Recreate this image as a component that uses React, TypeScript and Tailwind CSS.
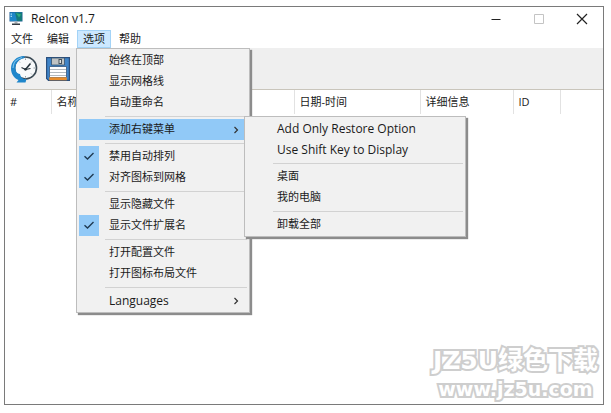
import clsx from "clsx";
import type React from "react";

interface MenuEntry {
	label: string;
	latin?: boolean;
	checked?: boolean;
	submenu?: MenuEntry[][];
}

const MENU_BAR = ["文件", "编辑", "选项", "帮助"];

const CONTEXT_MENU: MenuEntry[][] = [
	[
		{ label: "Add Only Restore Option", latin: true },
		{ label: "Use Shift Key to Display", latin: true },
	],
	[{ label: "桌面" }, { label: "我的电脑" }],
	[{ label: "卸载全部" }],
];

const OPTIONS_MENU: MenuEntry[][] = [
	[{ label: "始终在顶部" }, { label: "显示网格线" }, { label: "自动重命名" }],
	[{ label: "添加右键菜单", submenu: CONTEXT_MENU }],
	[
		{ label: "禁用自动排列", checked: true },
		{ label: "对齐图标到网格", checked: true },
	],
	[{ label: "显示隐藏文件" }, { label: "显示文件扩展名", checked: true }],
	[{ label: "打开配置文件" }, { label: "打开图标布局文件" }],
	[{ label: "Languages", latin: true, submenu: [] }],
];

const AppIcon = () => (
	<svg className="w-4 h-4" viewBox="0 0 16 16" aria-hidden="true">
		<path d="M1.500 1h13v9.500h-13z" fill="#1f5c94" />
		<path d="M2 1.500h12v8.500H2z" fill="#1e86c8" />
		<path d="M7 1.500h7v8.500H9z" fill="#157a7c" />
		<path d="M8 2l5 1.500-2 3z" fill="#2fae7c" />
		<path d="M2.600 2.500h1.400v1.200H2.600zM2.600 4.800h1.400v1.200H2.600z" fill="#a8dcf2" />
		<path d="M6.500 10.500h3v2h-3z" fill="#a9b0b5" />
		<path d="M4 12.500h8v1.500H4z" fill="#333b42" />
	</svg>
);

const RestoreIcon = () => (
	<svg className="w-7 h-7" viewBox="0 0 28 28" aria-hidden="true">
		<circle cx="15.500" cy="13" r="11" fill="#f8fafb" stroke="#3b4a55" strokeWidth="1.600" />
		<path
			d="M14.500 1C6.500 1 1 6.500 1 13.500c0 5.500 3 9.500 7.500 11.500l-2 2.500h9l1-3.500c-4 .2-6-2-6.500-5C6.500 18.500 5.500 16 5.500 13 5.500 8 9 4 14.500 3z"
			fill="#1f86cb"
		/>
		<path d="M12 2.500C6.500 4 3 8 3 13" fill="none" stroke="#74bfe9" strokeWidth="1.200" />
		<path d="M15.500 14.500 20.500 8.500" fill="none" stroke="#26333b" strokeWidth="1.600" />
		<path d="M15.500 14.500l-4-2M15.500 14.500l5-1" fill="none" stroke="#26333b" strokeWidth="1.200" />
		<circle cx="15.500" cy="14.300" r="1.400" fill="#26333b" />
		<path
			d="M15.500 3.500v1.500M25 13h-1.500M15.500 22.500V21M22 6.500l-1 1M22 19.500l-1-1M9 6.500l1 1"
			stroke="#8b979f"
			strokeWidth=".9"
		/>
	</svg>
);

const SaveIcon = () => (
	<svg className="w-6 h-6" viewBox="0 0 24 24" aria-hidden="true">
		<path d="M.6 .6h22.800v22.800H2.500L.6 21.500z" fill="#3f84c8" stroke="#2a4f7d" strokeWidth="1.200" />
		<path d="M5.500 1h13v7h-13z" fill="#bfc3c4" stroke="#35536f" strokeWidth=".8" />
		<path d="M12.500 2h3.500v5h-3.500z" fill="#46525b" />
		<path d="M13.500 3h1.500v3h-1.500z" fill="#dfe3e5" />
		<path d="M3.500 9.500h17v11h-17z" fill="#fff" stroke="#34577f" strokeWidth=".8" />
		<path d="M4 12.500h16M4 15.500h16M4 18.500h16" stroke="#a9b1b8" strokeWidth=".9" />
		<path d="M3.200 20.300h17.600v3H3.200z" fill="#e88d2c" />
	</svg>
);

const CheckMark = () => (
	<svg className="w-3 h-3" viewBox="0 0 12 12" fill="none" stroke="#1f3a52" strokeWidth="1.400" aria-hidden="true">
		<path d="M1.500 5.200 4.500 8 10.500 2" />
	</svg>
);

const Chevron = () => (
	<svg className="w-2 h-2" viewBox="0 0 8 8" fill="none" stroke="#333" strokeWidth="1.200" aria-hidden="true">
		<path d="M2.500 1 5.500 4 2.500 7" />
	</svg>
);

const Menu: React.FC<{ groups: MenuEntry[][]; className: string }> = ({
	groups,
	className,
}) => (
	<div
		role="menu"
		className={clsx(
			"absolute z-10 border border-[#bdbdbd] bg-[#f1f1f1] px-0.5 py-px shadow-[2px_2px_1px_#8c8c8c]",
			className,
		)}
	>
		{groups.map((group, index) => (
			<div key={group[0].label}>
				{index > 0 && (
					<div className="flex h-1.5 items-center pl-[26px]">
						<div className="h-px w-full bg-[#d2d2d2]" />
					</div>
				)}
				{group.map((entry) => (
					<div key={entry.label} className="relative">
						<button
							type="button"
							role={entry.checked ? "menuitemcheckbox" : "menuitem"}
							aria-checked={entry.checked}
							className={clsx(
								"flex h-[21px] w-full items-center whitespace-nowrap pr-[7px] text-left",
								entry.latin && "text-[12px]",
								entry.submenu?.length && "bg-[#91c9f7]",
							)}
						>
							<span
								className={clsx(
									"mr-2.5 flex h-full w-5 items-center justify-center",
									entry.checked && "bg-[#91c9f7]",
								)}
							>
								{entry.checked && <CheckMark />}
							</span>
							<span className="flex-1">{entry.label}</span>
							{entry.submenu && <Chevron />}
						</button>
						{entry.submenu && entry.submenu.length > 0 && (
							<Menu groups={entry.submenu} className="left-[165px] -top-[3px] w-[222px]" />
						)}
					</div>
				))}
			</div>
		))}
	</div>
);

const TitleBar = () => (
	<header className="flex h-[23px] items-center pl-[3px]">
		<AppIcon />
		<h1 className="ml-[7px] flex-1 text-[12px]">ReIcon v1.7</h1>
		<button type="button" aria-label="最小化" className="flex w-[43px] justify-center">
			<svg className="w-3 h-3" viewBox="0 0 12 12" stroke="#222" aria-hidden="true">
				<path d="M1.500 6.500h9" />
			</svg>
		</button>
		<button type="button" aria-label="最大化" disabled className="flex w-[43px] justify-center">
			<svg className="w-3 h-3" viewBox="0 0 12 12" fill="none" stroke="#c4c4c4" aria-hidden="true">
				<path d="M1.500 1.500h9v9h-9z" />
			</svg>
		</button>
		<button type="button" aria-label="关闭" className="flex w-[43px] justify-center">
			<svg className="w-3 h-3" viewBox="0 0 12 12" stroke="#222" strokeWidth="1.200" aria-hidden="true">
				<path d="M1 1l10 10M11 1 1 11" />
			</svg>
		</button>
	</header>
);

export default function App() {
	return (
		<div className="flex min-h-screen bg-white pt-1.5 pr-[7px] pb-2 pl-1 font-['Open_Sans','Noto_Sans_CJK_SC',sans-serif] text-[11px] text-[#1a1a1a]">
			<main className="relative flex min-w-0 flex-1 flex-col border border-[#7a7a7a]">
				<TitleBar />

				<nav className="flex h-[18px] gap-0.5">
					{MENU_BAR.map((label) => (
						<div key={label} className="relative">
							<button
								type="button"
								className={clsx(
									"flex h-full items-center px-1.5",
									label === "选项" && "bg-[#cce8ff] outline outline-[#a3d3f7] -outline-offset-1",
								)}
							>
								{label}
							</button>
							{label === "选项" && (
								<Menu groups={OPTIONS_MENU} className="-left-px top-full w-[174px]" />
							)}
						</div>
					))}
				</nav>

				<div className="flex h-[42px] items-center gap-2 border-b border-[#c9c5bb] bg-[#efefef] pl-[5px]">
					<button type="button" aria-label="还原图标布局">
						<RestoreIcon />
					</button>
					<button type="button" aria-label="保存图标布局">
						<SaveIcon />
					</button>
				</div>

				<table className="w-full table-fixed text-left">
					<thead>
						<tr className="h-6 *:border-r *:border-[#e2e2e2] *:px-[5px] *:py-0 *:font-normal *:last:border-r-0">
							<th className="w-[46px]">#</th>
							<th className="w-[243px]">名称</th>
							<th className="w-[126px]">日期-时间</th>
							<th className="w-[93px]">详细信息</th>
							<th className="w-[47px]">ID</th>
							<th aria-hidden="true" />
						</tr>
					</thead>
				</table>

				<div className="absolute right-[5px] bottom-0.5 flex flex-col items-center gap-0.5 font-['DejaVu_Sans','Noto_Sans_CJK_SC',sans-serif] font-bold text-white [-webkit-text-stroke:4px_#cecece] [paint-order:stroke_fill]">
					<span className="text-[25px] leading-[26px]">JZ5U绿色下载</span>
					<span className="text-[19px] leading-[26px]">www.jz5u.com</span>
				</div>
			</main>
		</div>
	);
}
